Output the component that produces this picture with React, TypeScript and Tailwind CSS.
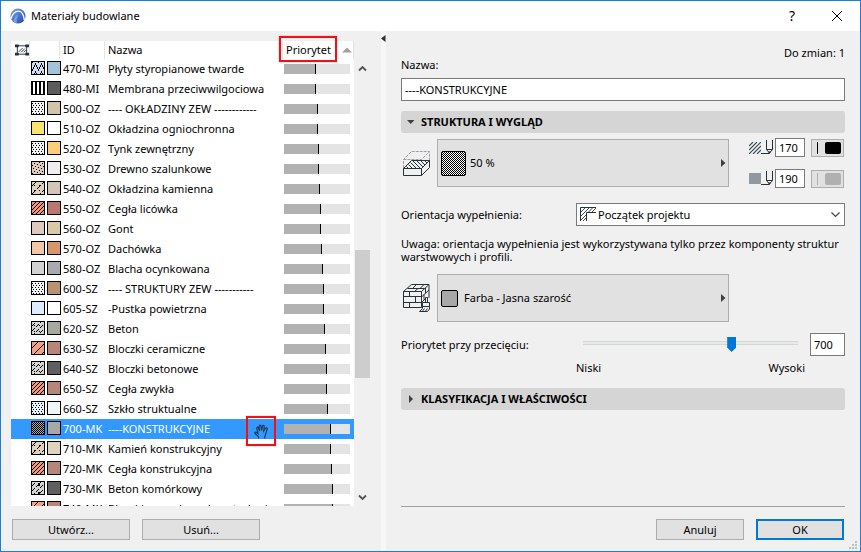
import type { ReactNode } from "react";

type Kind =
  | "solid"
  | "styro"
  | "stripes"
  | "dots"
  | "wood"
  | "stone"
  | "brick"
  | "block"
  | "concrete"
  | "cellular"
  | "half";

type Material = { id: string; name: string; kind: Kind; fill: string; surface: string };

const mod = (n: number, m: number) => ((n % m) + m) % m;

/* Each hatch is a rule that tells whether a pixel of the swatch is inked. */
const hatches: Record<Kind, (x: number, y: number) => boolean> = {
  solid: () => false,
  styro: (x, y) => mod(y - Math.abs(mod(x, 6) - 3) * 2, 8) === 1 || mod(y - Math.abs(mod(x, 6) - 3) * 2, 8) === 2,
  stripes: (x) => x % 4 === 0 || x % 4 === 3,
  dots: (x, y) => y % 2 === 1 && mod(x, 3) === (y % 4 === 1 ? 0 : 1),
  wood: (x, y) => mod(x + y, 4) === 3 && mod(x * 3 - y, 8) !== 1,
  stone: (x, y) => (mod(x + y, 8) === 3 && mod(x, 5) !== 4) || (x % 5 === 2 && y % 5 === 3),
  brick: (x, y) => mod(x + y, 4) === 3,
  block: (x, y) => mod(x + y, 8) === 5,
  concrete: (x, y) => (mod(x + y, 5) === 3 && mod(x, 4) !== 3) || (x % 5 === 2 && y % 6 === 3),
  cellular: (x, y) =>
    (mod(x + y, 5) === 3 && mod(x, 4) !== 3) || (x > 5 && x < 8 && ((y > 0 && y < 4) || y > 9)),
  half: (x, y) => mod(x + y, 2) === 0,
};

function hatchPath(kind: Kind, size: number) {
  let d = "";
  for (let y = 0; y < size; y++)
    for (let x = 0; x < size; x++) if (hatches[kind](x, y)) d += `M${x} ${y}h1v1h-1z`;
  return d;
}

const materials: Material[] = [
  { id: "470-MI", name: "Płyty styropianowe twarde", kind: "styro", fill: "#cfe0f5", surface: "#a3c4d8" },
  { id: "480-MI", name: "Membrana przeciwwilgociowa", kind: "stripes", fill: "#ffffff", surface: "#5c5c5c" },
  { id: "500-OZ", name: "---- OKŁADZINY ZEW ------------", kind: "dots", fill: "#f2f2f2", surface: "#d2c4a8" },
  { id: "510-OZ", name: "Okładzina ogniochronna", kind: "solid", fill: "#f7e56f", surface: "#ffffff" },
  { id: "520-OZ", name: "Tynk zewnętrzny", kind: "dots", fill: "#f2f2f2", surface: "#ffcf78" },
  { id: "530-OZ", name: "Drewno szalunkowe", kind: "wood", fill: "#dccabb", surface: "#efefef" },
  { id: "540-OZ", name: "Okładzina kamienna", kind: "stone", fill: "#dcd2bd", surface: "#d3c5b7" },
  { id: "550-OZ", name: "Cegła licówka", kind: "brick", fill: "#f3937b", surface: "#bb7870" },
  { id: "560-OZ", name: "Gont", kind: "solid", fill: "#dfc8be", surface: "#d9c9a5" },
  { id: "570-OZ", name: "Dachówka", kind: "solid", fill: "#f0c8a6", surface: "#d9966b" },
  { id: "580-OZ", name: "Blacha ocynkowana", kind: "solid", fill: "#d1d1d1", surface: "#a9aaad" },
  { id: "600-SZ", name: "---- STRUKTURY ZEW -----------", kind: "dots", fill: "#f2f2f2", surface: "#b99370" },
  { id: "605-SZ", name: "-Pustka powietrzna", kind: "solid", fill: "#dcedff", surface: "#ffffff" },
  { id: "620-SZ", name: "Beton", kind: "concrete", fill: "#d5d5d5", surface: "#a5a89d" },
  { id: "630-SZ", name: "Bloczki ceramiczne", kind: "block", fill: "#f3a183", surface: "#b88577" },
  { id: "640-SZ", name: "Bloczki betonowe", kind: "concrete", fill: "#d5d5d5", surface: "#606060" },
  { id: "650-SZ", name: "Cegła zwykła", kind: "brick", fill: "#f0977a", surface: "#b58778" },
  { id: "660-SZ", name: "Szkło struktualne", kind: "dots", fill: "#e6f4fb", surface: "#eff6f3" },
  { id: "700-MK", name: "----KONSTRUKCYJNE", kind: "half", fill: "#a8a8a8", surface: "#a8a8a8" },
  { id: "710-MK", name: "Kamień konstrukcyjny", kind: "stone", fill: "#dcd2bd", surface: "#dfd3bd" },
  { id: "720-MK", name: "Cegła konstrukcyjna", kind: "brick", fill: "#f0977a", surface: "#b58778" },
  { id: "730-MK", name: "Beton komórkowy", kind: "cellular", fill: "#d5d5d5", surface: "#606060" },
  { id: "740-MK", name: "Bloczki ceramiczne konstrukcyjne", kind: "block", fill: "#f3a183", surface: "#b88577" },
];

function Swatch({ kind, color, size = 12, rounded = false }: { kind: Kind; color: string; size?: number; rounded?: boolean }) {
  return (
    <svg
      width={size + 2}
      height={size + 2}
      viewBox={`-1 -1 ${size + 2} ${size + 2}`}
      shapeRendering={rounded ? "auto" : "crispEdges"}
      className="block shrink-0"
      aria-hidden="true"
    >
      <rect x={-0.5} y={-0.5} width={size + 1} height={size + 1} rx={rounded ? 1.5 : 0} fill={color} stroke="#000" />
      <path d={hatchPath(kind, size)} fill="#000" />
    </svg>
  );
}

function AppLogo() {
  return (
    <svg width="16" height="16" viewBox="0 0 16 16" aria-hidden="true">
      <defs>
        <linearGradient id="logo" x1="0" y1="0" x2="1" y2="1">
          <stop offset="0" stopColor="#8aa6d8" />
          <stop offset="0.5" stopColor="#4a78cc" />
          <stop offset="1" stopColor="#1f46a4" />
        </linearGradient>
      </defs>
      <circle cx="8" cy="8" r="7.6" fill="url(#logo)" />
      <path d="M0.800 11C2 6 5.500 3 8.600 3.100C12 3.200 13.800 7 14.300 12" fill="none" stroke="#fff" strokeWidth="1.300" />
      <path d="M3.500 14C4 10 6 6.800 8.400 6.600C7 9 6.500 12 6.800 15.500z" fill="#7d9fe0" />
    </svg>
  );
}

function FrameIcon() {
  return (
    <svg width="15" height="12" viewBox="0 0 15 12" aria-hidden="true" className="block">
      <path d="M2.500 1.500h10v9h-10z" fill="none" stroke="#263238" />
      <path d="M0 0h4v3H0zM11 0h4v3h-4zM0 9h4v3H0zM11 9h4v3h-4z" fill="#263238" />
      <path d="M4 8l4-4M6.500 8.500l4-4M9.500 8.500l2.500-2.500" stroke="#263238" />
    </svg>
  );
}

function HandCursor() {
  return (
    <svg width="15" height="15" viewBox="0 0 15 15" aria-hidden="true" className="block">
      <path
        d="M4.500 14.500V12.500L1 9.500C0.200 8.500 1.600 7.500 2.600 8.500L4 9.500L2.800 4.500C2.600 3 4 2.700 4.500 4L5.500 7L5.200 2.200C5.300 0.800 6.800 0.800 7 2.200L7.500 6.500L8.500 2C9 0.900 10.300 1.200 10.200 2.500L9.700 7L11.700 4.200C12.600 3.200 13.800 4 13.200 5.200C12 8 12 10.500 10.800 12.200V14.500"
        fill="none"
        stroke="#1f3b57"
        strokeWidth="1.200"
      />
    </svg>
  );
}

function LayerIcon() {
  return (
    <svg width="27" height="25" viewBox="0 0 27 25" aria-hidden="true" className="block">
      <defs>
        <clipPath id="layer-top">
          <path d="M1.500 17.500L9.500 9.500H26.500L18.500 17.500z" />
        </clipPath>
      </defs>
      <path
        d="M0.500 17V8.500L8.500 0.500H26.500V9M0.500 8.500H18.500L26.500 0.500M18.500 8.500V17"
        fill="none"
        stroke="#9aa2a6"
        strokeDasharray="3 1"
      />
      <g fill="none" stroke="#263238">
        <path d="M0.500 17.500L8.500 9.500H26.500L18.500 17.500z" fill="#f0f0f0" />
        <path d="M0.500 17.500H18.500V24.500H0.500zM18.500 17.500L26.500 9.500V16.500L18.500 24.500" fill="#f0f0f0" />
        <path clipPath="url(#layer-top)" d="M0 12l8 8M3 11l8 8M6 10l8 8M10 10l8 8M14 10l8 8M18 10l8 8M22 10l8 8" />
      </g>
    </svg>
  );
}

function BrickIcon() {
  return (
    <svg width="27" height="28" viewBox="0 0 27 28" aria-hidden="true" className="block">
      <g fill="none" stroke="#263238">
        <path d="M0.500 7.500H18.500V23.500H0.500zM0.500 7.500L8.500 0.500H26V14M18.500 7.500L26 0.500" />
        <path d="M0.500 12.500H18.500M0.500 18.500H18.500M6.500 7.500v5M12.500 12.500v6M6.500 18.500v5M4.500 4.500H21.500M11.500 7.500L15 4.500M9.500 4.500l4-4M17 4.500l4-4" />
        <path d="M18.500 13L26 6M18.500 18.500l3.500-3.500M22.500 4v5.500M21 10.500v5" />
      </g>
      <path d="M19 27V18H22V13H25V18H27V28H16z" fill="#f0f0f0" />
      <path
        d="M22.500 18V13.500H24.500V18M19.500 18.500H26.500V22.500H19.500zM19.500 22.500V24.500L16.500 27.500H24.500L26.500 25V22.500M19.500 27l2-2.500M22.500 27l2-2.500"
        fill="none"
        stroke="#263238"
      />
    </svg>
  );
}

function HatchIcon() {
  return (
    <svg width="12" height="12" viewBox="0 0 12 12" aria-hidden="true">
      <path d="M0 4l4-4M0 8l8-8M0 12L12 0M4 12l8-8M8 12l4-4" stroke="#37474f" strokeWidth="1.100" />
    </svg>
  );
}

function PenIcon() {
  return (
    <svg width="13" height="15" viewBox="0 0 13 15" aria-hidden="true">
      <path d="M5.500 0V9.500L8.500 13L11.500 9.500V0M5.500 9.500h6M0 13.500h8.500" fill="none" stroke="#263238" />
      <path d="M7 11.500h3L8.500 14z" fill="#263238" />
    </svg>
  );
}

function CornerIcon() {
  return (
    <svg width="17" height="15" viewBox="0 0 17 15" aria-hidden="true" className="block">
      <path d="M0.500 14V0.500H16M6.500 14V5.500H16" fill="none" stroke="#263238" />
      <path d="M1 5l4-4M1 9l8-8M1 13l5-5M3 14l3-3M8.500 5l4-4M12 5l4-4" stroke="#263238" strokeWidth="0.900" />
    </svg>
  );
}

function Chevron({ up = false }: { up?: boolean }) {
  return (
    <svg width="9" height="7" viewBox="0 0 9 7" aria-hidden="true" className="block">
      <path d={up ? "M1 5.500L4.500 2L8 5.500" : "M1 1.500L4.500 5L8 1.500"} fill="none" stroke="#555" strokeWidth="1.900" />
    </svg>
  );
}

function PushButton({ children, primary = false, wide = false }: { children: ReactNode; primary?: boolean; wide?: boolean }) {
  return (
    <button
      type="button"
      className={`flex h-[21px] items-center justify-center bg-[#e1e1e1] ${wide ? "w-[118px]" : "w-[88px]"} ${
        primary ? "border-2 border-[#0078d7]" : "border border-[#adadad]"
      }`}
    >
      {children}
    </button>
  );
}

function SectionHeader({ title, open = false }: { title: string; open?: boolean }) {
  return (
    <h2>
      <button
        type="button"
        aria-expanded={open}
        className="flex h-[22px] w-full items-center rounded-[3px] bg-[#d5d5d5] pl-[6px] text-left font-bold"
      >
        <span className="flex w-[14px]">
          <svg width="8" height="8" viewBox="0 0 8 8" aria-hidden="true">
            <path d={open ? "M0 2h7.500L3.750 6z" : "M2 0v8L6 4z"} fill="#404040" />
          </svg>
        </span>
        {title}
      </button>
    </h2>
  );
}

function PickerButton({ children }: { children: ReactNode }) {
  return (
    <button
      type="button"
      className="flex h-[48px] min-w-0 flex-1 items-center border border-[#adadad] bg-[#e1e1e1] pr-[2px] pl-[3px] text-left"
    >
      {children}
      <svg width="5" height="8" viewBox="0 0 5 8" className="ml-auto" aria-hidden="true">
        <path d="M0 0v8l4.500-4z" fill="#404040" />
      </svg>
    </button>
  );
}

function PenRow({ label, icon, value, disabled = false }: { label: string; icon: ReactNode; value: string; disabled?: boolean }) {
  return (
    <div className="flex h-[19px] items-center">
      <span className="flex items-center">
        {icon}
        <PenIcon />
      </span>
      <input
        aria-label={label}
        defaultValue={value}
        className="ml-[1px] h-[19px] w-[30px] border border-[#7a7a7a] bg-white pl-[3px]"
      />
      <button
        type="button"
        aria-label={`${label}: kolor`}
        className="ml-[6px] flex h-[18px] w-[33px] items-center gap-[7px] border border-[#adadad] bg-[#e1e1e1] pl-[5px]"
      >
        <span className={`h-[12px] w-px ${disabled ? "bg-[#b0b0b0]" : "bg-black"}`} />
        <span className={`h-[12px] w-[16px] rounded-[2px] ${disabled ? "bg-[#b0b0b0]" : "bg-black"}`} />
      </button>
    </div>
  );
}

function MaterialRow({ material }: { material: Material }) {
  const selected = material.id === "700-MK";
  const offset = Math.floor(parseInt(material.id, 10) * 0.066);
  return (
    <tr className={`h-[20px] ${selected ? "bg-[#3399ff] text-white" : ""}`}>
      <td />
      <td className="p-0">
        <span className="flex gap-[2px] pb-[2px] pl-[1px]">
          <Swatch kind={material.kind} color={material.fill} />
          <Swatch kind="solid" color={material.surface} />
        </span>
      </td>
      <td className="overflow-hidden p-0 pl-[3px] whitespace-nowrap">{material.id}</td>
      <td className="p-0 pl-[3px]">
        <span className="relative block">
          <span className="block overflow-hidden whitespace-nowrap">{material.name}</span>
          {selected && (
            <span className="absolute top-[-5px] right-[7px] flex h-[30px] w-[30px] items-center justify-center border-2 border-[#f01018] shadow-[0_0_1px_#ff6060]">
              <HandCursor />
            </span>
          )}
        </span>
      </td>
      <td className="p-0 pl-[1px]">
        <span className="flex h-[10px] w-[66px] bg-[#e4e4e4]">
          <span className="border-r border-black bg-[#b2b2b2]" style={{ width: offset + 1 }} />
        </span>
      </td>
    </tr>
  );
}

function MaterialList() {
  const head = "h-[18px] border-r border-[#e4e4e4] p-0 text-left font-normal";
  return (
    <div className="flex min-h-0 flex-1">
      {/* The clip leaves room above the list for the frame round the sorted column. */}
      <div className="w-[343px] bg-white [clip-path:inset(-8px_0_0_0)]">
        <table className="w-full table-fixed border-separate border-spacing-0">
          <colgroup>
            <col className="w-[19px]" />
            <col className="w-[30px]" />
            <col className="w-[45px]" />
            <col className="w-[178px]" />
            <col />
          </colgroup>
          <thead>
            <tr>
              <th className={head} aria-label="Edycja">
                <span className="flex pl-[4px]">
                  <FrameIcon />
                </span>
              </th>
              <th className={head} aria-label="Wzór" />
              <th className={head}>
                <span className="pl-[3px]">ID</span>
              </th>
              <th className={head}>
                <span className="pl-[3px]">Nazwa</span>
              </th>
              <th className={head}>
                <span className="relative flex items-center justify-between pr-[1px] pl-[3px]">
                  Priorytet
                  <svg width="10" height="6" viewBox="0 0 10 6" aria-hidden="true">
                    <path d="M0 5.500L5 0.500l5 5z" fill="#a0a0a0" />
                  </svg>
                  <span className="absolute top-[-6px] left-[-4px] h-[26px] w-[58px] border-2 border-[#f01018] shadow-[0_0_1px_#ff6060]" />
                </span>
              </th>
            </tr>
          </thead>
          <tbody>
            {materials.map((m) => (
              <MaterialRow key={m.id} material={m} />
            ))}
          </tbody>
        </table>
      </div>
      <div className="ml-[1px] flex w-[15px] flex-col items-center pt-[24px] pb-[5px]">
        <Chevron up />
        <div className="flex-[178]" />
        <div className="h-[128px] w-full bg-[#cdcdcd]" />
        <div className="flex-[116]" />
        <Chevron />
      </div>
    </div>
  );
}

export default function App() {
  return (
    <main className="relative flex h-screen flex-col overflow-hidden border border-[#1a7fd4] bg-[#f0f0f0] font-['Noto_Sans','Open_Sans',sans-serif] text-[11px] leading-[16px] text-black">
      <header className="flex h-[30px] shrink-0 items-center bg-white pr-[17px] pl-[9px]">
        <AppLogo />
        <h1 className="ml-[5px]">Materiały budowlane</h1>
        <button type="button" aria-label="Pomoc" className="ml-auto text-[14px]">
          ?
        </button>
        <button type="button" aria-label="Zamknij" className="ml-[36px]">
          <svg width="12" height="12" viewBox="0 0 12 12" aria-hidden="true">
            <path d="M1 1l10 10M11 1L1 11" stroke="#000" />
          </svg>
        </button>
      </header>

      <div className="flex min-h-0 flex-1">
        <section className="flex w-[369px] shrink-0 flex-col pt-[10px] pb-[11px] pl-[10px]">
          <MaterialList />
          <div className="mt-[13px] flex gap-[12px] pl-[1px]">
            <PushButton wide>Utwórz...</PushButton>
            <PushButton wide>Usuń...</PushButton>
          </div>
        </section>

        <div className="ml-[11px] w-[5px] shrink-0 bg-[#f7f7f7] pt-[4px]">
          <svg width="5" height="7" viewBox="0 0 5 7" className="block" aria-hidden="true">
            <path d="M4.500 0v7L0 3.500z" fill="#303030" />
          </svg>
        </div>

        <section className="flex min-w-0 flex-1 flex-col pt-[14px] pr-[15px] pb-[11px] pl-[15px]">
          <div className="flex h-[28px] justify-between">
            <label htmlFor="name" className="self-end">
              Nazwa:
            </label>
            <span>Do zmian: 1</span>
          </div>
          <input
            id="name"
            defaultValue="----KONSTRUKCYJNE"
            className="mt-[5px] mb-[10px] h-[23px] w-full border border-[#7a7a7a] bg-white pl-[3px]"
          />
          <SectionHeader title="STRUKTURA I WYGLĄD" open />

          <div className="mt-[5px] flex items-center">
            <span className="w-[36px] pl-[2px]">
              <LayerIcon />
            </span>
            <PickerButton>
              <Swatch kind="half" color="#ffffff" size={23} rounded />
              <span className="pl-[4px]">50 %</span>
            </PickerButton>
            <div className="ml-[20px] flex w-[96px] flex-col gap-[12px]">
              <PenRow label="Pióro wypełnienia" icon={<HatchIcon />} value="170" />
              <PenRow
                label="Pióro tła"
                icon={<span className="h-[11px] w-[12px] bg-[#92999e]" />}
                value="190"
                disabled
              />
            </div>
          </div>

          <div className="mt-[15px] flex items-center">
            <label htmlFor="orientation" className="w-[175px] shrink-0">
              Orientacja wypełnienia:
            </label>
            <span className="relative flex flex-1">
              <select
                id="orientation"
                className="h-[23px] w-full appearance-none border border-[#7a7a7a] bg-white pl-[21px]"
              >
                <option>Początek projektu</option>
              </select>
              <span className="pointer-events-none absolute top-[4px] left-[4px]">
                <CornerIcon />
              </span>
              <svg
                width="9"
                height="6"
                viewBox="0 0 9 6"
                className="pointer-events-none absolute top-[9px] right-[5px]"
                aria-hidden="true"
              >
                <path d="M0.500 0.500L4.500 4.500L8.500 0.500" fill="none" stroke="#444" strokeWidth="1.200" />
              </svg>
            </span>
          </div>

          <p className="mt-[11px] leading-[13px]">
            Uwaga: orientacja wypełnienia jest wykorzystywana tylko przez komponenty struktur warstwowych i profili.
          </p>

          <div className="mt-[11px] flex items-center pr-[116px]">
            <span className="w-[36px] pl-[2px]">
              <BrickIcon />
            </span>
            <PickerButton>
              <Swatch kind="solid" color="#a8a8a8" size={15} rounded />
              <span className="pl-[6px]">Farba - Jasna szarość</span>
            </PickerButton>
          </div>

          <div className="mt-[11px] flex items-center">
            <label htmlFor="priority" className="w-[175px] shrink-0">
              Priorytet przy przecięciu:
            </label>
            <span className="flex flex-1 px-[7px]">
              <input
                id="priority"
                type="range"
                min={0}
                max={1000}
                defaultValue={700}
                className="h-[15px] w-full appearance-none bg-transparent [&::-webkit-slider-runnable-track]:h-[15px] [&::-webkit-slider-runnable-track]:bg-[linear-gradient(transparent_4px,#d3d7d5_4px,#d3d7d5_5px,#e7eae9_5px,#e7eae9_7px,#d3d7d5_7px,#d3d7d5_8px,transparent_8px)] [&::-webkit-slider-thumb]:h-[15px] [&::-webkit-slider-thumb]:w-[9px] [&::-webkit-slider-thumb]:appearance-none [&::-webkit-slider-thumb]:bg-[#0078d7] [&::-webkit-slider-thumb]:[clip-path:polygon(0_0,100%_0,100%_70%,50%_100%,0_70%)]"
              />
            </span>
            <input
              aria-label="Wartość priorytetu"
              defaultValue="700"
              className="ml-[5px] h-[23px] w-[35px] border border-[#7a7a7a] bg-white pl-[3px]"
            />
          </div>
          <div className="mt-[4px] mb-[12px] flex justify-between pr-[40px] pl-[175px]">
            <span>Niski</span>
            <span>Wysoki</span>
          </div>

          <SectionHeader title="KLASYFIKACJA I WŁAŚCIWOŚCI" />

          <div className="mt-auto flex justify-end gap-[12px] border-t border-[#a0a0a0] pt-[12px] pr-[1px]">
            <PushButton>Anuluj</PushButton>
            <PushButton primary>OK</PushButton>
          </div>
        </section>
      </div>
      <svg width="9" height="9" viewBox="0 0 9 9" className="absolute right-[2px] bottom-[1px]" aria-hidden="true">
        <path d="M6 0h2v2H6zM3 3h2v2H3zM6 3h2v2H6zM0 6h2v2H0zM3 6h2v2H3zM6 6h2v2H6z" fill="#bfbfbf" />
      </svg>
    </main>
  );
}
